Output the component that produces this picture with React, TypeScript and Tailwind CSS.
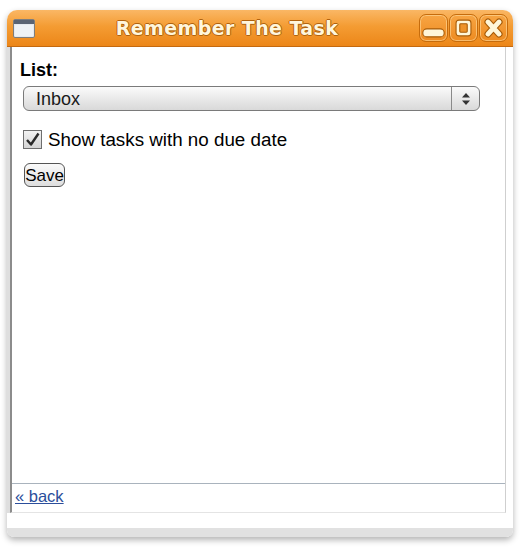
import React from "react";

const UI_FONT = "font-['Liberation_Sans',Arial,sans-serif]";

function TitleButton({ children }: { children: React.ReactNode }) {
  return (
    <div className="flex h-[28px] w-[29px] items-center justify-center rounded-[7px] border border-[#c66c0c] bg-[linear-gradient(to_bottom,#f7a544,#ee8b20)] shadow-[inset_0_0_0_1px_rgba(255,226,170,0.55)]">
      <svg width="29" height="28" viewBox="0 0 29 28">
        {children}
      </svg>
    </div>
  );
}

function WindowIcon() {
  return (
    <svg width="22" height="19" viewBox="0 0 22 19">
      <rect x="0.5" y="0.5" width="21" height="18" rx="1.5" fill="#e4e9ef" stroke="#7d7d7d" />
      <rect x="1" y="1" width="20" height="4" fill="#5a6474" />
      <rect x="2" y="6" width="18" height="11" fill="#eef2f6" />
    </svg>
  );
}

export default function App() {
  return (
    <div className={`min-h-[550px] w-[526px] bg-white pt-[10px] ${UI_FONT}`}>
      <div className="ml-[7px] w-[506px] overflow-hidden rounded-t-[10px] rounded-b-[7px] bg-white shadow-[0_3px_6px_rgba(0,0,0,0.3)]">
        {/* title bar */}
        <div className="flex h-[37px] items-center border-b border-[#c4690f] bg-[linear-gradient(to_bottom,#fab765,#f49c33_45%,#ec8618)] pl-[6px] pr-[5px]">
          <WindowIcon />
          <div className="flex-1 text-center font-['DejaVu_Sans',sans-serif] text-[19px] font-bold tracking-[0.4px] text-[#fff6dc] [text-shadow:1px_0_0_#b0620e,-1px_0_0_#b0620e,0_1px_0_#b0620e,0_-1px_0_#b0620e]">
            Remember The Task
          </div>
          <div className="flex gap-[1px]">
            <TitleButton>
              <rect x="3" y="15" width="23" height="8.5" rx="4.25" fill="#fff6d8" stroke="#a85c08" strokeWidth="1.2" />
            </TitleButton>
            <TitleButton>
              <rect x="6.5" y="5.5" width="16" height="17" rx="3" fill="#fff6d8" stroke="#a85c08" strokeWidth="1.2" />
              <rect x="10.5" y="9.5" width="8" height="9" rx="1" fill="#ee9228" stroke="#a85c08" strokeWidth="1.2" />
            </TitleButton>
            <TitleButton>
              <path d="M8.5 7.5 L20.5 20.5 M20.5 7.5 L8.5 20.5" stroke="#a85c08" strokeWidth="7.5" strokeLinecap="round" />
              <path d="M8.5 7.5 L20.5 20.5 M20.5 7.5 L8.5 20.5" stroke="#fff6d8" strokeWidth="5.2" strokeLinecap="round" />
            </TitleButton>
          </div>
        </div>

        {/* body */}
        <div className="flex h-[466px]">
          <div className="w-[3px] bg-[#dedede]" />
          <div className="flex flex-1 flex-col border-b border-l-2 border-r border-b-[#e4e4e4] border-l-[#8c8c8c] border-r-[#cfcfcf]">
            <div className="flex-1 pl-[8px] pt-[13px]">
              <div className="text-[18px] font-bold leading-[21px] text-black">List:</div>

              <div className="ml-[3px] mt-[5px] flex h-[25px] w-[457px] items-center rounded-[6px] border border-[#7a7a7a] bg-[linear-gradient(to_bottom,#fbfbfb,#e6e6e6_60%,#d9d9d9)]">
                <span className="flex-1 pl-[12px] text-[18px] leading-none text-[#1a1a1a]">Inbox</span>
                <div className="flex h-full w-[28px] items-center justify-center border-l border-[#8a8a8a]">
                  <svg width="10" height="14" viewBox="0 0 10 14">
                    <path d="M5 1 L9 5.5 L1 5.5 Z" fill="#333" />
                    <path d="M5 13 L9 8.5 L1 8.5 Z" fill="#333" />
                  </svg>
                </div>
              </div>

              <div className="ml-[3px] mt-[18px] flex h-[21px] items-center">
                <div className="flex h-[19px] w-[19px] items-center justify-center border border-[#6e6e6e] bg-[linear-gradient(to_bottom,#f2f2f2,#d4d4d4)]">
                  <svg width="15" height="15" viewBox="0 0 15 15">
                    <path d="M2 8 L6 12.5 L13.5 1.5" fill="none" stroke="#2a2a2a" strokeWidth="2.4" strokeLinejoin="round" />
                  </svg>
                </div>
                <span className="ml-[6px] text-[18.8px] leading-[21px] text-black">Show tasks with no due date</span>
              </div>

              <button className="ml-[4px] mt-[13px] flex h-[24px] w-[41px] items-center justify-center rounded-[6px] border border-[#555] bg-[linear-gradient(to_bottom,#fafafa,#dedede)] p-0 text-[17px] leading-none text-black">
                Save
              </button>
            </div>

            <div className="h-[29px] border-t border-[#a9b3bd] pl-[3px] pt-[1px]">
              <a href="#" className="text-[16.5px] leading-[22px] text-[#2b4e9b] underline">
                « back
              </a>
            </div>
          </div>
          <div className="w-[7px] bg-white" />
        </div>

        <div className="h-[15px] bg-white" />
        <div className="h-[9px] bg-[#e1e1e1]" />
      </div>
    </div>
  );
}
